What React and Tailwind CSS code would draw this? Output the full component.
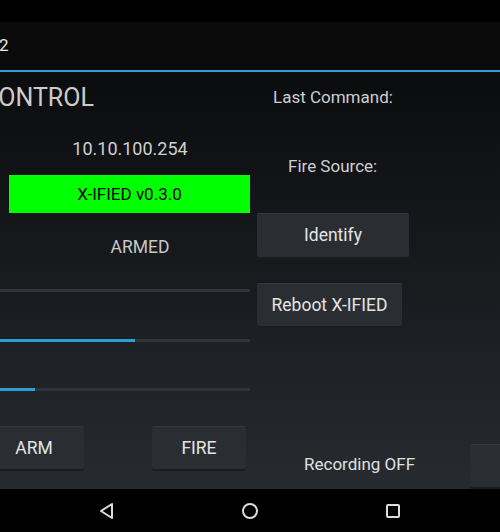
import React from "react";

const font = { fontFamily: "Roboto, 'Liberation Sans', sans-serif" };

function Btn({ children, className = "" }) {
    return (
        <div
            className={
                "flex items-center justify-center bg-[#2a2e33] text-[#e4e4e4] text-[17.5px] rounded-[2px] border-t border-[#34383d] shadow-[0_2px_0_#1a1d20] " +
                className
            }
        >
            {children}
        </div>
    );
}

function Seek({ value, className = "" }) {
    return (
        <div className={"h-[3px] w-[250px] bg-[#303337] flex " + className}>
            <div className="h-full bg-[#2d9fd3]" style={{ width: value }} />
        </div>
    );
}

export default function App() {
    return (
        <div className="w-[500px] h-[532px] overflow-hidden flex flex-col bg-black" style={font}>
            {/* barra de estado */}
            <div className="h-[22px] bg-black" />

            {/* action bar */}
            <div className="h-[48px] bg-[#0b0b0c] flex items-center text-[#e8e8e8] text-[17px]">
                <span className="-ml-[1px]">2</span>
            </div>
            <div className="h-[2px] bg-[#2f9fcf]" />

            {/* contenido */}
            <div className="flex-1 flex bg-gradient-to-b from-[#0b0c0e] to-[#272b30] overflow-hidden">
                <div className="w-[257px] flex flex-col shrink-0">
                    <div className="h-[52px] flex items-center text-[25px] text-[#cccccc] whitespace-nowrap">
                        <span className="-ml-[18px]">CONTROL</span>
                    </div>
                    <div className="h-[48px] flex items-center justify-center w-[260px] text-[18px] text-[#cfcfcf]">
                        10.10.100.254
                    </div>
                    <div className="mt-[3px] ml-[9px] w-[241px] h-[38px] bg-[#00ff00] flex items-center justify-center pt-[2px] text-black text-[17px]">
                        X-IFIED v0.3.0
                    </div>
                    <div className="h-[68px] flex items-center justify-center w-[280px] text-[17.5px] text-[#c8c8c8]">
                        ARMED
                    </div>
                    <Seek value="0px" className="mt-[8px]" />
                    <Seek value="135px" className="mt-[47px]" />
                    <Seek value="35px" className="mt-[46px]" />
                    <div className="mt-[35px] flex">
                        <Btn className="w-[100px] -ml-[16px] h-[43px]">ARM</Btn>
                        <Btn className="w-[94px] ml-[68px] h-[43px]">FIRE</Btn>
                    </div>
                </div>

                <div className="flex-1 flex flex-col">
                    <div className="h-[52px] flex items-center pl-[16px] text-[17px] text-[#cfcfcf]">
                        Last Command:
                    </div>
                    <div className="h-[86px] flex items-center pl-[31px] text-[17px] text-[#cfcfcf]">
                        Fire Source:
                    </div>
                    <Btn className="mt-[3px] w-[152px] h-[44px]">Identify</Btn>
                    <Btn className="mt-[26px] w-[145px] h-[43px]">Reboot X-IFIED</Btn>
                    <div className="mt-[119px] flex items-start">
                        <div className="w-[213px] pt-[7px] pl-[47px] text-[17px] text-[#e0e0e0] whitespace-nowrap">
                            Recording OFF
                        </div>
                        <Btn className="mt-[-1px] w-[60px] h-[43px]" />
                    </div>
                </div>
            </div>

            {/* barra de navegación */}
            <div className="h-[43px] bg-black flex items-center justify-center gap-[125px] text-[#dcdcdc]">
                <svg width="18" height="18" viewBox="0 0 18 18" fill="none" stroke="currentColor" strokeWidth="2" strokeLinejoin="round">
                    <path d="M14 2 L3 9 L14 16 Z" />
                </svg>
                <svg width="18" height="18" viewBox="0 0 18 18" fill="none" stroke="currentColor" strokeWidth="2">
                    <circle cx="9" cy="9" r="7" />
                </svg>
                <svg width="18" height="18" viewBox="0 0 18 18" fill="none" stroke="currentColor" strokeWidth="2">
                    <rect x="3" y="3" width="12" height="12" rx="1" />
                </svg>
            </div>
        </div>
    );
}
